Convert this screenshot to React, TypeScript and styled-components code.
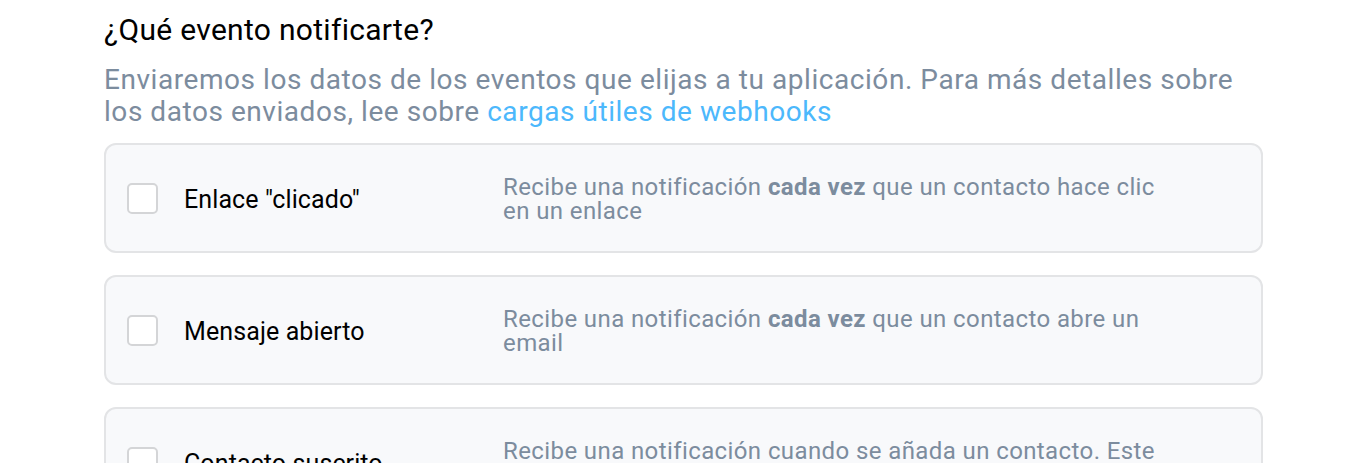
import styled, { createGlobalStyle } from 'styled-components';

const GlobalStyle = createGlobalStyle`
  body {
    margin: 0;
    background: #ffffff;
    font-family: Roboto, 'Noto Sans', sans-serif;
  }
`;

type EventOption = {
  label: string;
  before: string;
  bold?: string;
  after?: string;
};

const EVENTS: EventOption[] = [
  {
    label: 'Enlace "clicado"',
    before: 'Recibe una notificación ',
    bold: 'cada vez',
    after: ' que un contacto hace clic en un enlace',
  },
  {
    label: 'Mensaje abierto',
    before: 'Recibe una notificación ',
    bold: 'cada vez',
    after: ' que un contacto abre un email',
  },
  {
    label: 'Contacto suscrito',
    before: 'Recibe una notificación cuando se añada un contacto. Este evento también se activa al volver',
  },
];

const Page = styled.section`
  width: 1159px;
  padding: 10px 0 0 104px;
`;

const Title = styled.h2`
  margin: 0;
  font-size: 30px;
  font-weight: 400;
  line-height: 40px;
  color: #000000;
  letter-spacing: 0.3px;
`;

const Intro = styled.p`
  margin: 14px 0 15px;
  font-size: 28px;
  line-height: 32px;
  letter-spacing: 0.55px;
  color: #7c8c9e;
`;

const Link = styled.a`
  color: #4cb8fc;
  text-decoration: none;
`;

const List = styled.div`
  display: flex;
  flex-direction: column;
  gap: 22px;
`;

const Card = styled.label`
  box-sizing: border-box;
  height: 110px;
  display: grid;
  grid-template-columns: 31px 345px 672px;
  align-items: center;
  padding: 0 21px;
  background: #f8f9fb;
  border: 2px solid #e3e4e6;
  border-radius: 12px;
`;

const Box = styled.span`
  box-sizing: border-box;
  width: 31px;
  height: 31px;
  background: #ffffff;
  border: 2px solid #d4d5d7;
  border-radius: 5px;
`;

const Label = styled.span`
  padding: 4px 0 0 26px;
  font-size: 25px;
  line-height: 28px;
  color: #000000;
  letter-spacing: 0.1px;
`;

const Description = styled.span`
  padding-top: 2px;
  font-size: 24px;
  line-height: 24px;
  letter-spacing: 0.4px;
  color: #7c8c9e;
`;

export default function App() {
  return (
    <Page>
      <GlobalStyle />
      <Title>¿Qué evento notificarte?</Title>
      <Intro>
        Enviaremos los datos de los eventos que elijas a tu aplicación. Para más detalles sobre
        los datos enviados, lee sobre <Link href="#">cargas útiles de webhooks</Link>
      </Intro>
      <List>
        {EVENTS.map((ev) => (
          <Card key={ev.label}>
            <Box />
            <Label>{ev.label}</Label>
            <Description>
              {ev.before}
              {ev.bold && <b>{ev.bold}</b>}
              {ev.after}
            </Description>
          </Card>
        ))}
      </List>
    </Page>
  );
}
